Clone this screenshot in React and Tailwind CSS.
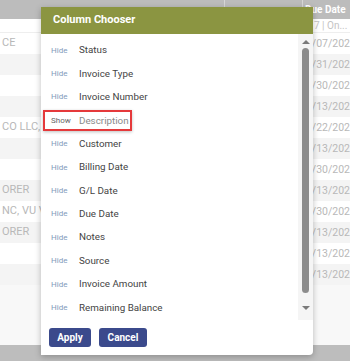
import React from 'react'

const columns = [
  'Status',
  'Invoice Type',
  'Invoice Number',
  'Description',
  'Customer',
  'Billing Date',
  'G/L Date',
  'Due Date',
  'Notes',
  'Source',
  'Invoice Amount',
  'Remaining Balance',
]

const rows = [
  { left: 'CE', date: '6/07/202' },
  { left: '', date: '5/31/202' },
  { left: '', date: '9/30/202' },
  { left: '', date: '6/13/202' },
  { left: 'CO LLC, B', date: '9/22/202' },
  { left: '', date: '6/13/202' },
  { left: '', date: '9/30/202' },
  { left: 'ORER', date: '6/13/202' },
  { left: 'NC, VU V', date: '9/30/202' },
  { left: 'ORER', date: '6/13/202' },
  { left: '', date: '6/13/202' },
  { left: '', date: '6/13/202' },
]

function Grid() {
  return (
    <div className="flex flex-col h-full">
      <div className="h-[19px] bg-[#bcbcbc] flex shrink-0">
        <div className="w-[225px] border-r border-[#d6d6d6]" />
        <div className="w-[78px] border-r border-[#d6d6d6]" />
        <div className="flex-1 flex items-center pl-[2px] text-[10px] font-bold text-white whitespace-nowrap">Due Date</div>
      </div>
      <div className="h-[14px] bg-white flex shrink-0 border-b border-[#eeeeee]">
        <div className="w-[314px]" />
        <div className="text-[10px] leading-[14px] text-[#c4c4c4] whitespace-nowrap">7 | On...</div>
      </div>
      {rows.map((r, i) => (
        <div key={i} className={`h-[21px] flex items-center shrink-0 ${i % 2 ? 'bg-[#f4f4f4]' : 'bg-white'}`}>
          <div className="w-[312px] pl-[2px] text-[11px] text-[#b8b8b8] whitespace-nowrap overflow-hidden">{r.left}</div>
          <div className="text-[10.5px] text-[#b8b8b8] whitespace-nowrap">{r.date}</div>
        </div>
      ))}
      <div className="flex-1 bg-[#f8f8f8]" />
      <div className="h-[16px] bg-[#bdbdbd] shrink-0" />
    </div>
  )
}

function ColumnRow({ name }) {
  const shown = name === 'Description'
  if (shown) {
    return (
      <div className="h-[23.4px] flex items-center pl-[2px]">
        <div className="h-[21px] w-[89px] flex items-center pl-[6px] border-2 border-[#e5393b] shadow-[0_1px_3px_rgba(0,0,0,0.25)]">
          <span className="w-[28px] text-[8px] text-[#666666]">Show</span>
          <span className="text-[9.8px] text-[#8a8a8a] whitespace-nowrap">{name}</span>
        </div>
      </div>
    )
  }
  return (
    <div className="h-[23.4px] flex items-center pl-[10px]">
      <span className="w-[28px] text-[8px] text-[#819bbb]">Hide</span>
      <span className="text-[9.8px] text-[#444444] whitespace-nowrap">{name}</span>
    </div>
  )
}

function ColumnChooser() {
  return (
    <div className="absolute left-[41px] top-[7px] w-[272px] h-[348px] bg-white rounded-br-[4px] shadow-[0_2px_6px_rgba(0,0,0,0.25)] flex flex-col">
      <div className="h-[27px] bg-[#8b9541] flex items-center pl-[12px] text-[11px] font-bold text-white shrink-0">
        Column Chooser
      </div>
      <div className="h-[286px] flex shrink-0">
        <div className="flex-1 pt-[5px] flex flex-col">
          {columns.map(c => <ColumnRow key={c} name={c} />)}
        </div>
        <div className="w-[15px] bg-[#f5f5f5] flex flex-col items-center pt-[6px]">
          <div className="w-0 h-0 border-x-[4px] border-x-transparent border-b-[4px] border-b-[#7a7a7a]" />
          <div className="mt-[4px] w-[7px] h-[245px] rounded-full bg-[#8c8c8c]" />
          <div className="mt-[13px] w-0 h-0 border-x-[4px] border-x-transparent border-t-[4px] border-t-[#7a7a7a]" />
        </div>
      </div>
      <div className="flex gap-[8px] pl-[8px] pt-[8px]">
        <button className="w-[42px] h-[19px] rounded-[3px] bg-[#3b4a8c] text-white text-[10px] font-bold">Apply</button>
        <button className="w-[48px] h-[19px] rounded-[3px] bg-[#3b4a8c] text-white text-[10px] font-bold">Cancel</button>
      </div>
    </div>
  )
}

export default function App() {
  return (
    <div className="relative w-[350px] h-[361px] overflow-hidden font-['Roboto',sans-serif]">
      <Grid />
      <ColumnChooser />
    </div>
  )
}
